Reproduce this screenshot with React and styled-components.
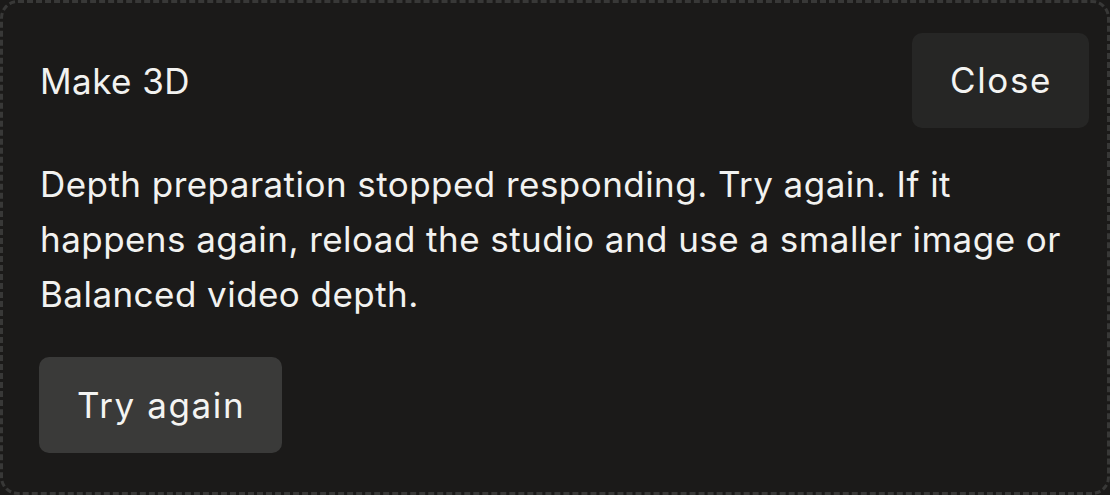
import React from "react";
import styled, { createGlobalStyle } from "styled-components";

const Global = createGlobalStyle`
  html, body {
    margin: 0;
    padding: 0;
    background: #1b1a19;
  }
  body {
    font-family: Inter, "Noto Sans", "Liberation Sans", sans-serif;
    font-optical-sizing: none;
    font-variation-settings: "opsz" 14;
    color: #f2f2f0;
  }
  * { box-sizing: border-box; }
`;

const Panel = styled.section`
  width: 1110px;
  height: 495px;
  border: 3px dashed #383837;
  border-radius: 18px;
  background: #1b1a19;
  padding: 30px 18px 39px 36px;
  display: flex;
  flex-direction: column;
`;

const Header = styled.header`
  display: flex;
  align-items: center;
  justify-content: space-between;
`;

const Title = styled.h2`
  margin: 0 0 0 1px;
  font-size: 35px;
  font-weight: 400;
  letter-spacing: 0.45px;
  line-height: 1.2;
  color: #f2f2f0;
`;

const Button = styled.button`
  font-family: inherit;
  font-size: 35px;
  font-weight: 400;
  letter-spacing: 1.6px;
  line-height: 1;
  color: #f4f4f2;
  border: none;
  border-radius: 10px;
  cursor: pointer;
  height: ${(p) => (p.$tall ? "96px" : "95px")};
  padding: 0 37px 0 38px;
  background: ${(p) => (p.$variant === "primary" ? "#3a3a39" : "#262625")};
`;

const Message = styled.p`
  margin: 29px 21px 0 1px;
  font-size: 35px;
  letter-spacing: 0.45px;
  line-height: 55px;
  color: #f2f2f0;
`;

const Actions = styled.div`
  margin-top: 35px;
  display: flex;
`;

export default function App() {
  return (
    <>
      <Global />
      <Panel>
        <Header>
          <Title>Make 3D</Title>
          <Button>Close</Button>
        </Header>
        <Message>
          Depth preparation stopped responding. Try again. If it happens again,
          reload the studio and use a smaller image or Balanced video depth.
        </Message>
        <Actions>
          <Button $variant="primary" $tall>
            Try again
          </Button>
        </Actions>
      </Panel>
    </>
  );
}
